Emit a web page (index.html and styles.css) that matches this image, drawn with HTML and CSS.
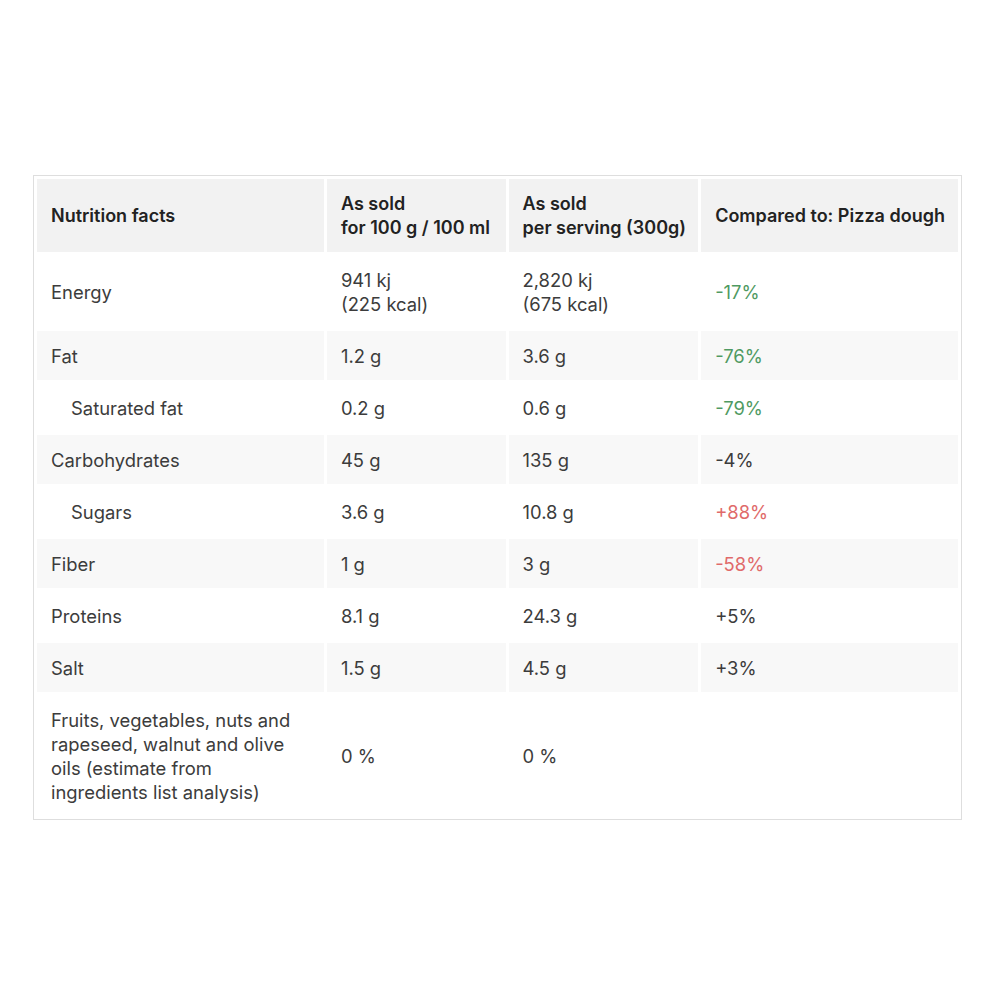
FILE: index.html
```html
<!DOCTYPE html>
<html lang="en">
<head>
<meta charset="utf-8">
<link rel="stylesheet" href="styles.css">
<title>Nutrition facts</title>
</head>
<body>
<div class="wrap">
<table class="facts">
  <thead>
    <tr>
      <th class="c1">Nutrition facts</th>
      <th class="c2">As sold<br>for 100 g / 100 ml</th>
      <th class="c3">As sold<br>per serving (300g)</th>
      <th class="c4">Compared to: Pizza dough</th>
    </tr>
  </thead>
  <tbody>
    <tr><td>Energy</td><td>941 kj<br>(225 kcal)</td><td>2,820 kj<br>(675 kcal)</td><td class="good">-17%</td></tr>
    <tr class="alt"><td>Fat</td><td>1.2 g</td><td>3.6 g</td><td class="good">-76%</td></tr>
    <tr><td class="sub">Saturated fat</td><td>0.2 g</td><td>0.6 g</td><td class="good">-79%</td></tr>
    <tr class="alt"><td>Carbohydrates</td><td>45 g</td><td>135 g</td><td>-4%</td></tr>
    <tr><td class="sub">Sugars</td><td>3.6 g</td><td>10.8 g</td><td class="bad">+88%</td></tr>
    <tr class="alt"><td>Fiber</td><td>1 g</td><td>3 g</td><td class="bad">-58%</td></tr>
    <tr><td>Proteins</td><td>8.1 g</td><td>24.3 g</td><td>+5%</td></tr>
    <tr class="alt"><td>Salt</td><td>1.5 g</td><td>4.5 g</td><td>+3%</td></tr>
    <tr><td>Fruits, vegetables, nuts and rapeseed, walnut and olive oils (estimate from ingredients list analysis)</td><td>0 %</td><td>0 %</td><td></td></tr>
  </tbody>
</table>
</div>
</body>
</html>
```
FILE: styles.css
```css
html, body {
  margin: 0;
  padding: 0;
  background: #ffffff;
}
body {
  font-family: "Inter", "Liberation Sans", sans-serif;
  font-size: 18.4px;
  color: #3c3c3c;
  padding: 175px 0 0 33px;
}
.wrap {
  width: 927px;
  border: 1px solid #dedede;
}
.facts {
  width: 927px;
  border-collapse: separate;
  border-spacing: 3px;
  table-layout: fixed;
}
.facts th,
.facts td {
  text-align: left;
  vertical-align: middle;
  line-height: 24px;
  padding: 13px 14px 12px 14px;
}
.facts th {
  background: #f2f2f2;
  color: #222222;
  font-weight: 600;
  font-size: 18px;
  white-space: nowrap;
}
.c1 { width: 258px; }
.c2 { width: 150px; }
.c3 { width: 161px; }
.c4 { width: 228px; }
.facts tr.alt td {
  background: #f8f8f8;
}
.facts td.sub {
  padding-left: 34px;
}
.good { color: #4f9a62; }
.bad { color: #e06a6a; }
```
